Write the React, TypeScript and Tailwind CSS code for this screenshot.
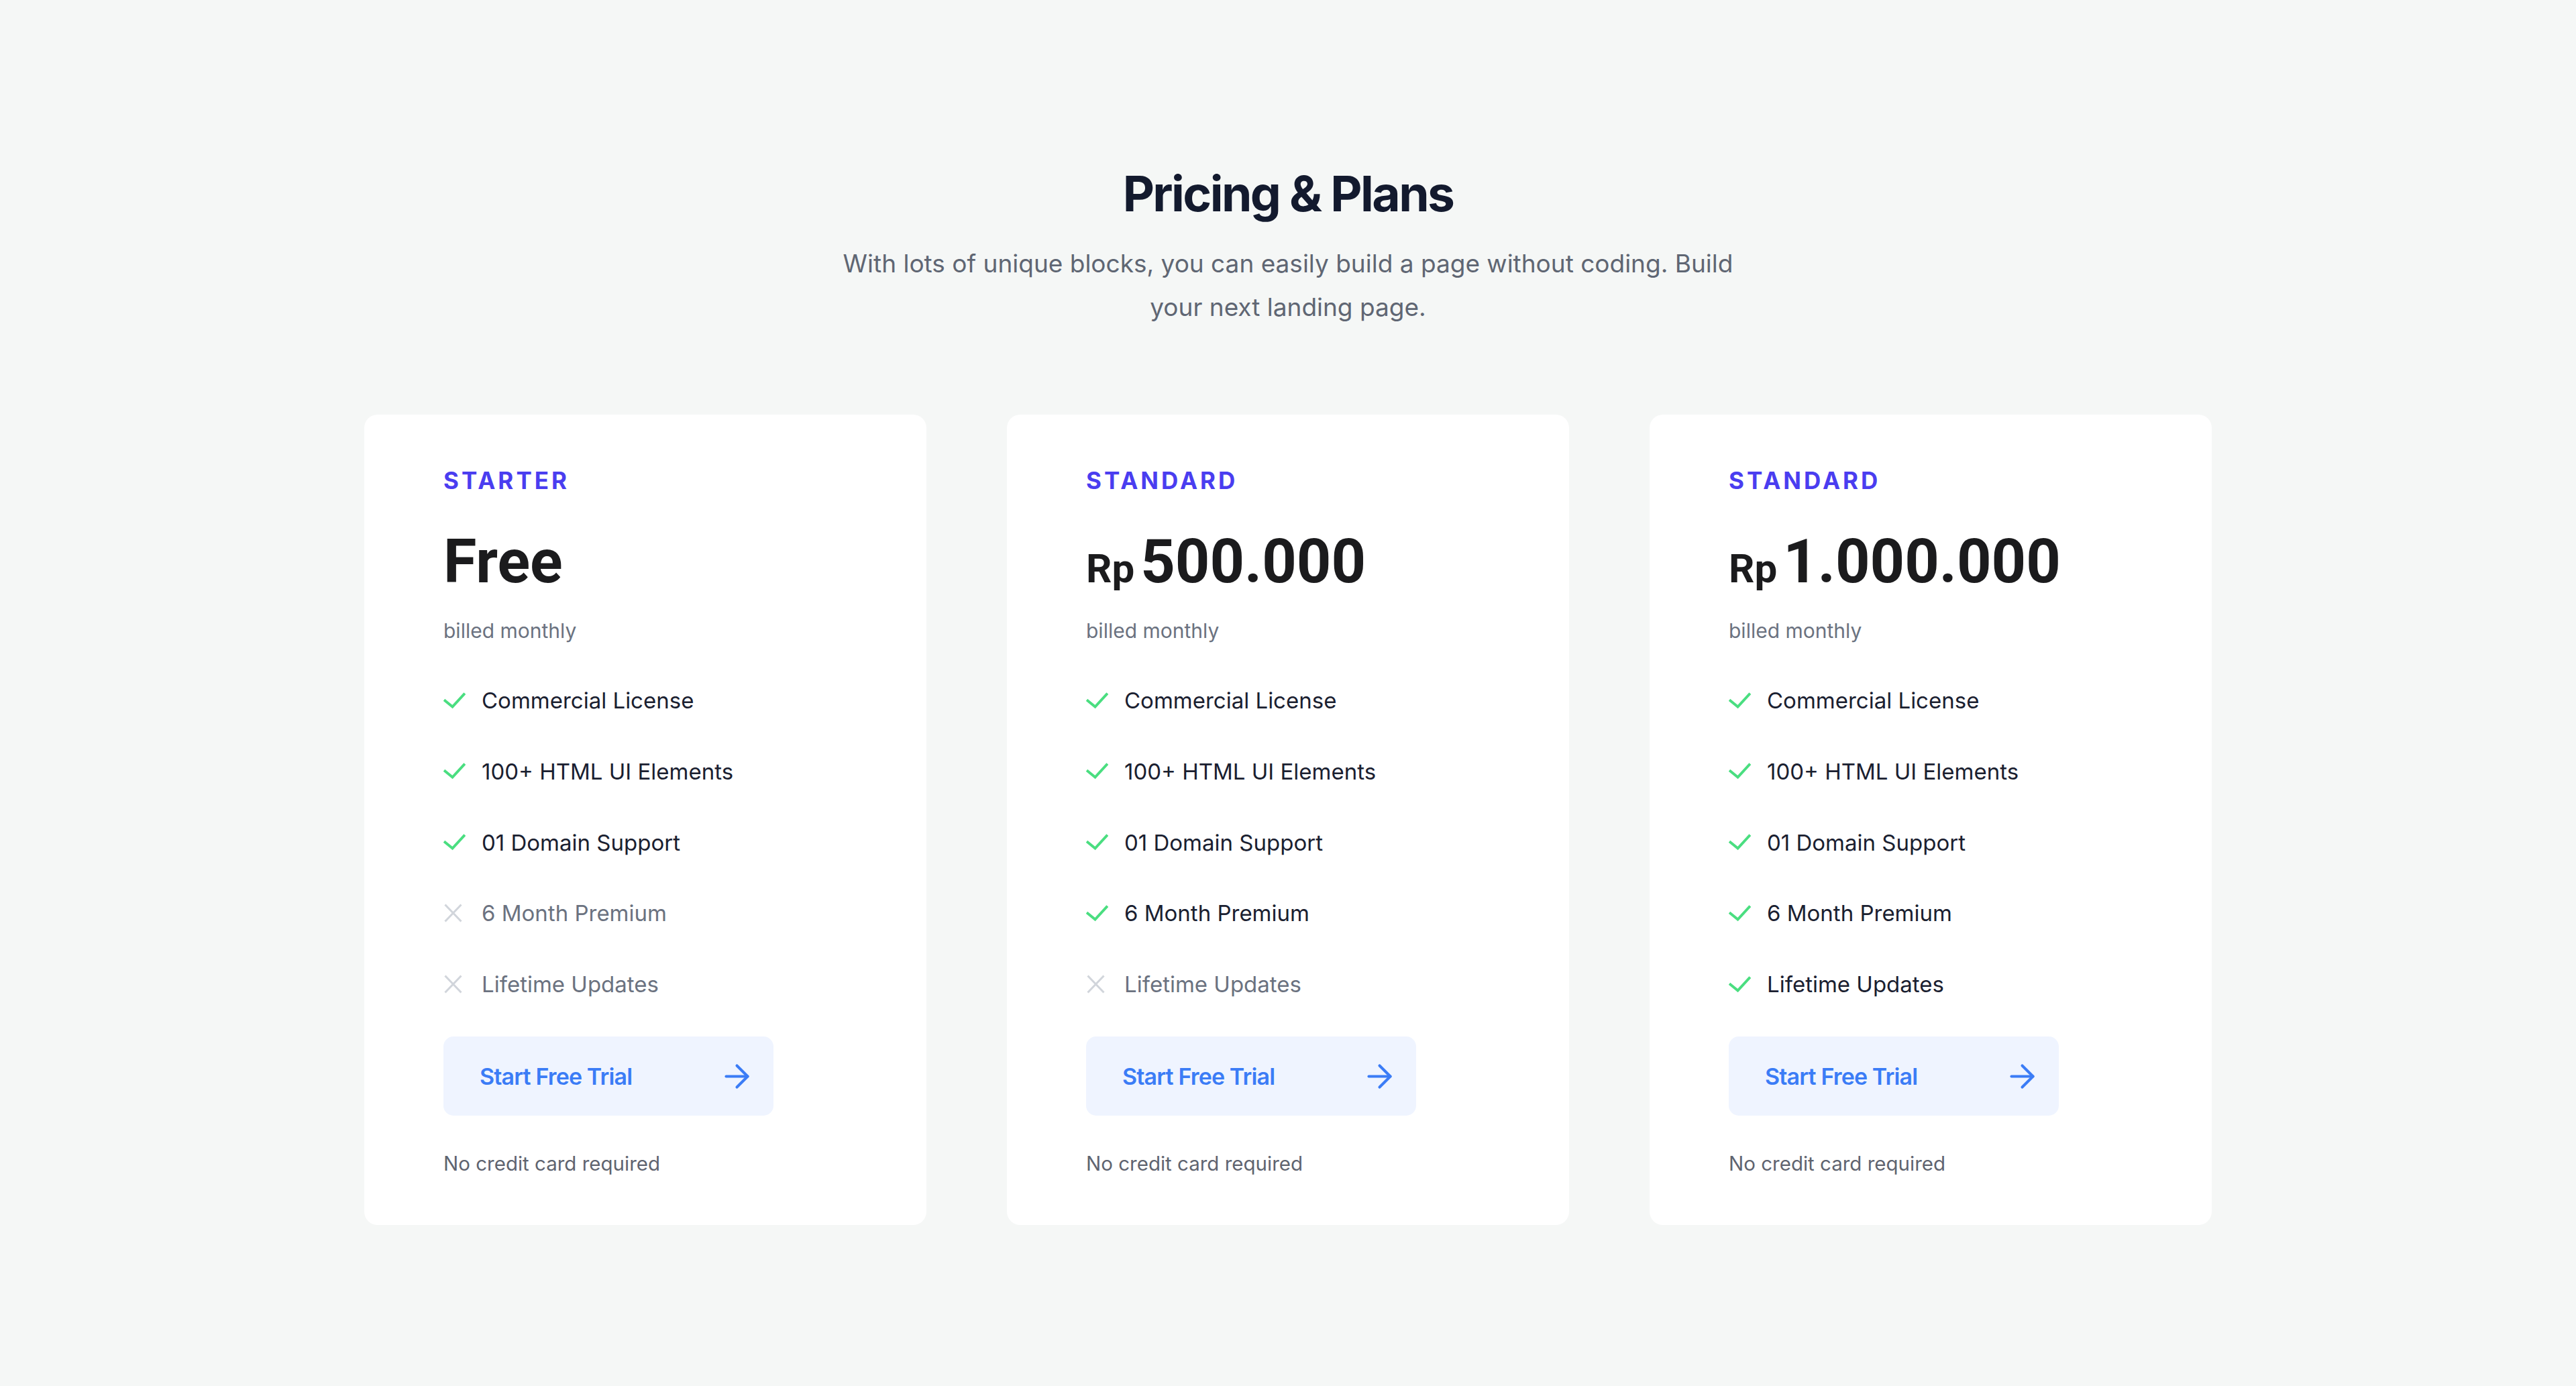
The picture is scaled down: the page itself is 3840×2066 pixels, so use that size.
import { ArrowRight } from 'lucide-react'

const featureNames = [
  'Commercial License',
  '100+ HTML UI Elements',
  '01 Domain Support',
  '6 Month Premium',
  'Lifetime Updates',
]

const plans = [
  { name: 'STARTER', price: null, included: [true, true, true, false, false] },
  { name: 'STANDARD', price: '500.000', included: [true, true, true, true, false] },
  { name: 'STANDARD', price: '1.000.000', included: [true, true, true, true, true] },
]

function CheckIcon() {
  return (
    <svg width="33" height="25" viewBox="0 0 33 25" fill="none" className="shrink-0">
      <path d="M2.5 12.5 13.5 21.5 30.5 3" stroke="#4ade80" strokeWidth={4} strokeLinecap="square" strokeLinejoin="miter" />
    </svg>
  )
}

function CrossIcon() {
  return (
    <svg width="33" height="29" viewBox="0 0 33 29" fill="none" className="shrink-0">
      <path d="M2.5 1.5 26.5 26.5M26.5 1.5 2.5 26.5" stroke="#d1d5db" strokeWidth={3} />
    </svg>
  )
}

function PlanCard({ plan }: { plan: (typeof plans)[number] }) {
  return (
    <div className="w-[838px] rounded-[20px] bg-white pl-[118px] pr-[80px] pt-[73px] pb-[72px]">
      <p className="font-[Inter,sans-serif] text-[35px] leading-[50px] font-bold tracking-[0.115em] text-[#4a3df0]">
        {plan.name}
      </p>

      {/* harga */}
      <div className="mt-[47px] flex h-[100px] items-baseline font-[Roboto,sans-serif] font-bold text-[#1b1b1d]">
        {plan.price ? (
          <>
            <span className="text-[60px] leading-[60px] mr-[9px]">Rp</span>
            <span className="text-[90px] leading-[100px]">{plan.price}</span>
          </>
        ) : (
          <span className="text-[90px] leading-[100px]">Free</span>
        )}
      </div>

      <p className="mt-[32px] font-[Inter,sans-serif] text-[30px] leading-[40px] text-[#6b7280]">billed monthly</p>

      <ul className="mt-[59px] flex flex-col gap-[55.75px] font-[Inter,sans-serif]">
        {featureNames.map((f, i) => (
          <li key={f} className="flex items-center h-[50px]">
            <div className="w-[57px] flex items-center">
              {plan.included[i] ? <CheckIcon /> : <CrossIcon />}
            </div>
            <span
              className={`text-[33px] leading-[50px] ${
                plan.included[i] ? 'text-[#1a2030]' : 'text-[#6b7280]'
              }`}
            >
              {f}
            </span>
          </li>
        ))}
      </ul>

      <button className="mt-[53px] flex h-[118px] w-[492px] items-center justify-between rounded-[15px] bg-[#eff4ff] pl-[54px] pr-[27px]">
        <span className="font-[Inter,sans-serif] text-[34px] font-semibold tracking-tight text-[#3b7cf6]">
          Start Free Trial
        </span>
        <ArrowRight size={55} strokeWidth={1.8} color="#3b7cf6" />
      </button>

      <p className="mt-[51px] font-[Inter,sans-serif] text-[29.5px] leading-[40px] text-[#5f6470]">
        No credit card required
      </p>
    </div>
  )
}

export default function App() {
  return (
    <div className="min-h-[2066px] w-full bg-[#f5f7f6] pt-[245px] flex flex-col items-center">
      <h1 className="font-[Inter,sans-serif] text-[73px] leading-[88px] font-bold tracking-[-0.035em] text-[#131a2e]">
        Pricing &amp; Plans
      </h1>
      <p className="mt-[27px] max-w-[1370px] text-center font-[Inter,sans-serif] text-[37px] leading-[65px] text-[#5f6673]">
        With lots of unique blocks, you can easily build a page without coding. Build your next landing page.
      </p>

      <div className="mt-[128px] flex gap-[120px]">
        {plans.map((p, i) => (
          <PlanCard key={i} plan={p} />
        ))}
      </div>
    </div>
  )
}
